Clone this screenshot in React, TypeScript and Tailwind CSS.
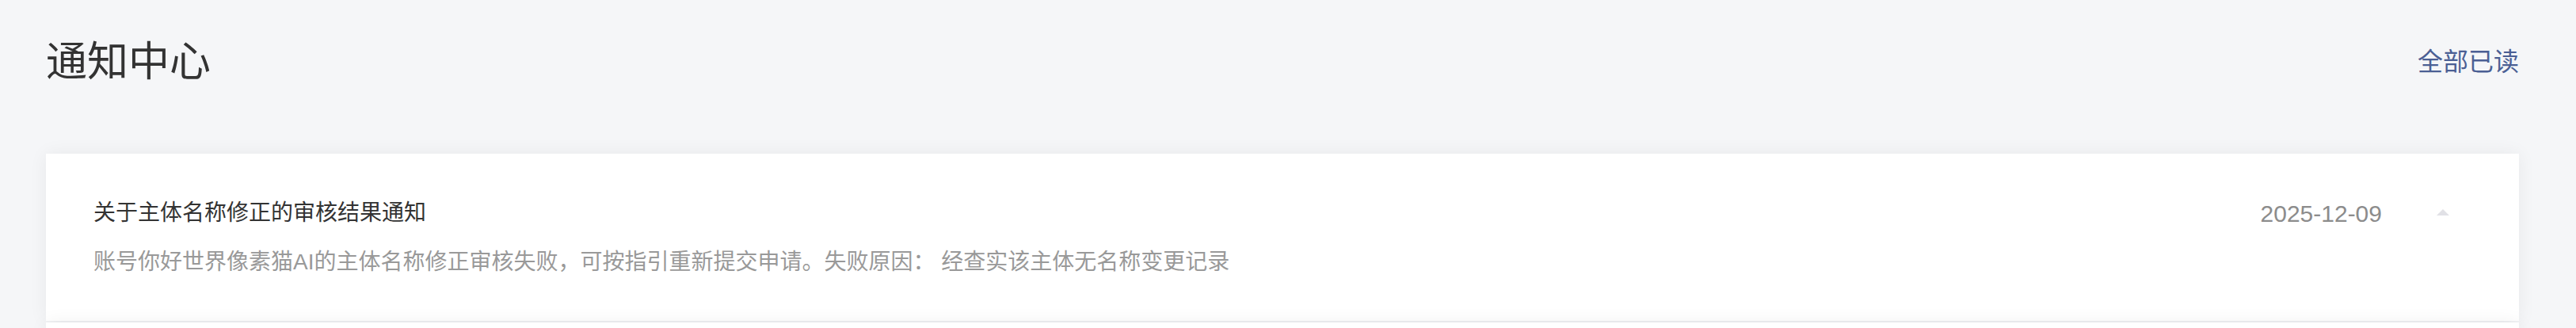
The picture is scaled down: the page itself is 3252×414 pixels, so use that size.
import React from "react";

const FONT = '"Liberation Sans", "Noto Sans CJK SC", sans-serif';

function Watermark() {
  const rows = [25, 115, 207, 298, 391];
  const cols: number[] = [];
  for (let i = 0; i < 10; i++) cols.push(150 + i * 313.6);
  return (
    <div className="pointer-events-none absolute inset-0 overflow-hidden" aria-hidden>
      {rows.map((y) =>
        cols.map((x) => (
          <span
            key={`${x}-${y}`}
            className="absolute text-[26px] leading-[26px] text-[rgba(0,0,0,0.025)] whitespace-nowrap"
            style={{ left: x, top: y - 4 }}
          >
            PnR1SABP
          </span>
        ))
      )}
    </div>
  );
}

export default function App() {
  return (
    <div
      className="relative min-h-[414px] bg-[#f5f6f8] pl-[58px] pr-[72px] pt-[52px] overflow-hidden"
      style={{ fontFamily: FONT }}
    >
      <div className="flex items-center justify-between">
        <h1 className="text-[52px] leading-[52px] text-[#333333] font-normal">通知中心</h1>
        <button className="text-[32px] leading-[32px] text-[#4b5f94]">全部已读</button>
      </div>

      <div className="mt-[90px] flex flex-col gap-[2px]">
        <div className="flex items-start bg-white px-[60px] pt-[61px] pb-[60px] shadow-[0_0_22px_rgba(0,0,0,0.06)]">
          <div className="flex flex-1 flex-col gap-[34px]">
            <div className="text-[28px] leading-[28px] text-[#333333]">关于主体名称修正的审核结果通知</div>
            <div className="text-[28px] leading-[28px] text-[#999999]">
              账号你好世界像素猫AI的主体名称修正审核失败，可按指引重新提交申请。失败原因： 经查实该主体无名称变更记录
            </div>
          </div>
          <div className="flex items-center">
            <span className="text-[30px] leading-[30px] text-[#8c8c8c]" style={{ fontFamily: '"Liberation Sans", sans-serif' }}>
              2025-12-09
            </span>
            <span className="ml-[69px] mr-[28px] mt-[-4px] block h-0 w-0 border-x-[8px] border-b-[8px] border-x-transparent border-b-[#e1e1e6]" />
          </div>
        </div>
        <div className="h-[210px] bg-white shadow-[0_0_22px_rgba(0,0,0,0.06)]" />
      </div>

      <Watermark />
    </div>
  );
}
